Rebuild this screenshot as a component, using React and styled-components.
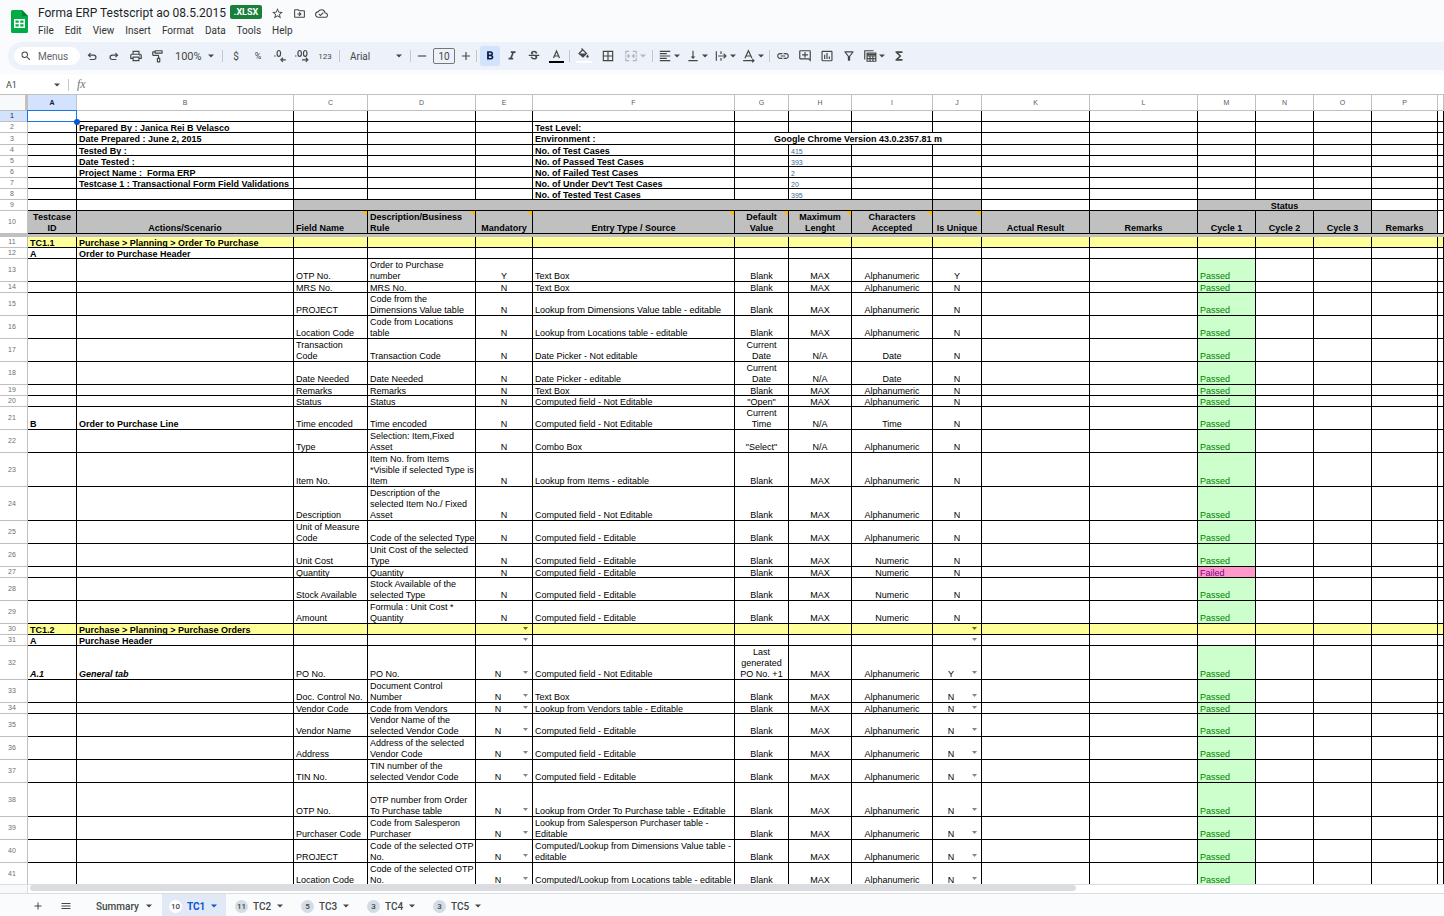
import React from "react";
import styled, { createGlobalStyle, css } from "styled-components";
import {
  MdStarBorder,
  MdOutlineDriveFileMove,
  MdOutlineCloudDone,
  MdSearch,
  MdOutlinePrint,
  MdOutlineImagesearchRoller,
  MdFormatBold,
  MdFormatItalic,
  MdStrikethroughS,
  MdBorderAll,
  MdFormatAlignLeft,
  MdVerticalAlignBottom,
  MdInsertLink,
  MdOutlineAddComment,
  MdInsertChartOutlined,
  MdOutlineFilterAlt,
  MdFunctions,
  MdAdd,
  MdRemove,
  MdMenu,
} from "react-icons/md";

const GlobalStyle = createGlobalStyle`
  *, *::before, *::after { box-sizing: border-box; }
  body { margin: 0; background: #f9fbfd; }
  button, input, select { font: inherit; color: inherit; }
`;

const ui = `Roboto, "Liberation Sans", sans-serif`;
const sheet = `"Liberation Sans", Arial, sans-serif`;

const Page = styled.div`
  height: 100vh;
  display: flex;
  flex-direction: column;
  overflow: hidden;
  background: #f9fbfd;
  color: #444746;
  font-family: ${ui};
`;

const Header = styled.header`
  flex: none;
  display: flex;
  gap: 10px;
  height: 42px;
  padding: 5px 11px 0;
`;

const Logo = styled.svg`
  flex: none;
  width: 17px;
  height: 23px;
  margin-top: 5px;
`;

const TitleRow = styled.div`
  display: flex;
  align-items: center;
  height: 16px;
`;

const Title = styled.h1`
  margin: 0;
  font-size: 12px;
  font-weight: 400;
  color: #1f1f1f;
  white-space: nowrap;
`;

const FileType = styled.span`
  margin: 0 8px 2px 4px;
  width: 32px;
  height: 14px;
  border-radius: 2px;
  background: #188038;
  color: #fff;
  font-size: 9px;
  font-weight: 700;
  line-height: 14px;
  text-align: center;
`;

const PlainButton = styled.button`
  display: inline-flex;
  align-items: center;
  justify-content: center;
  padding: 0;
  border: 0;
  background: none;
`;

const TitleButton = styled(PlainButton)`
  width: 14px;
  height: 14px;
  margin-right: 8px;
  svg {
    width: 13px;
    height: 13px;
  }
`;

const MenuBar = styled.nav`
  display: flex;
  gap: 11px;
  margin-top: 2px;
`;

const MenuButton = styled(PlainButton)`
  height: 14px;
  font-size: 10px;
  color: #333;
`;

const Toolbar = styled.div`
  flex: none;
  display: flex;
  align-items: center;
  height: 28px;
  margin-left: 8px;
  margin-bottom: 5px;
  padding-left: 6px;
  border-radius: 14px 0 0 14px;
  background: #edf2fa;
`;

const MenuSearch = styled.label`
  display: flex;
  align-items: center;
  gap: 6px;
  width: 66px;
  height: 18px;
  margin-right: 1px;
  padding-left: 6px;
  border-radius: 9px;
  background: #fff;
  svg {
    flex: none;
    width: 12px;
    height: 12px;
  }
  input {
    width: 38px;
    padding: 0;
    border: 0;
    outline: 0;
    background: none;
    font-size: 10px;
  }
  input::placeholder {
    color: #5f6368;
    opacity: 1;
  }
`;

const ToolButton = styled(PlainButton)`
  flex: none;
  width: ${(p) => p.$w || 22}px;
  height: 20px;
  font-size: ${(p) => p.$size || 9}px;
  color: ${(p) => (p.$dim ? "#b4b7bb" : "#444746")};
  svg.icon {
    flex: none;
    width: 14px;
    height: 14px;
  }
  ${(p) =>
    p.$split &&
    css`
      gap: 1px;
    `}
`;

const ActiveMark = styled.span`
  display: flex;
  align-items: center;
  justify-content: center;
  width: 20px;
  height: 20px;
  border-radius: 2px;
  background: #d3e3fd;
  color: #041e49;
`;

const Separator = styled.span`
  flex: none;
  width: 1px;
  height: 12px;
  margin: 0 2px;
  background: #c7c7c7;
`;

const SelectBox = styled.label`
  flex: none;
  display: flex;
  align-items: center;
  width: ${(p) => p.$w}px;
  padding: 0 5px 0 ${(p) => p.$pad}px;
  select {
    flex: 1;
    min-width: 0;
    padding: 0;
    border: 0;
    background: none;
    appearance: none;
    font-size: ${(p) => p.$size}px;
  }
`;

const SizeInput = styled.input`
  flex: none;
  width: 22px;
  height: 16px;
  margin: 0 2px;
  padding: 0;
  border: 1px solid #747775;
  border-radius: 2px;
  background: none;
  font-size: 10px;
  text-align: center;
`;

const FormulaBar = styled.div`
  flex: none;
  display: flex;
  align-items: center;
  height: 20px;
  border-bottom: 1px solid #c0c0c0;
  background: #fff;
`;

const NameBox = styled.label`
  display: flex;
  align-items: center;
  width: 66px;
  padding: 0 5px 0 6px;
  input {
    flex: 1;
    min-width: 0;
    padding: 0;
    border: 0;
    outline: 0;
    font-size: 9px;
  }
`;

const FxMark = styled.label`
  width: 20px;
  padding-left: 6px;
  font-family: "Liberation Serif", serif;
  font-style: italic;
  font-size: 12px;
  color: #6f757b;
`;

const FormulaInput = styled.input`
  flex: 1;
  border: 0;
  outline: 0;
  font-size: 10px;
`;

const GridArea = styled.main`
  flex: 1;
  min-height: 0;
  overflow: hidden;
  background: #fff;
`;

const Table = styled.table`
  width: 100%;
  table-layout: fixed;
  border-collapse: separate;
  border-spacing: 0;
  font-family: ${sheet};
  font-size: 9px;
  line-height: 11px;
  color: #000;
`;

const Corner = styled.td`
  padding: 0;
  border-right: 3px solid #c0c0c0;
  border-bottom: 1px solid #c0c0c0;
  background: #f8f9fa;
`;

const ColumnHead = styled.th`
  height: 16px;
  padding: 0;
  border-right: 1px solid #c0c0c0;
  border-bottom: 1px solid ${(p) => (p.$active ? "#1a73e8" : "#c0c0c0")};
  background: ${(p) => (p.$active ? "#d3e3fd" : "#fff")};
  color: ${(p) => (p.$active ? "#041e49" : "#575b5f")};
  font-size: 7px;
  font-weight: ${(p) => (p.$active ? 700 : 400)};
  line-height: 15px;
`;

const RowHead = styled.th`
  padding: 0;
  border-right: 1px solid #c0c0c0;
  border-bottom: 1px solid #c0c0c0;
  background: ${(p) => (p.$active ? "#d3e3fd" : "#fff")};
  color: ${(p) => (p.$active ? "#041e49" : "#6b6f73")};
  font-size: 7px;
  font-weight: 400;
  line-height: 8px;
  text-align: center;
`;

const RowNumber = styled.div`
  padding-right: 3px;
`;

const FrozenBar = styled.td`
  height: 3px;
  padding: 0;
  background: #c0c0c0;
`;

const Cell = styled.td`
  position: relative;
  padding: 0;
  border-right: 1px solid #000;
  border-bottom: 1px solid #000;
  background: ${(p) => p.$bg || "#fff"};
  color: ${(p) => p.$color || "#000"};
  font-weight: ${(p) => (p.$bold ? 700 : 400)};
  font-style: ${(p) => (p.$italic ? "italic" : "normal")};
  font-size: ${(p) => (p.$small ? 7 : 9)}px;
  text-align: ${(p) => (p.$center ? "center" : "left")};
`;

const CellBox = styled.div`
  display: flex;
  flex-direction: column;
  height: ${(p) => p.$h - 1}px;
  padding-top: 1px;
  overflow: hidden;
  white-space: pre;
`;

const CellText = styled.div`
  margin-top: auto;
  margin-bottom: -1px;
  padding-left: ${(p) => (p.$center ? 0 : 2)}px;
`;

const Note = styled.span`
  position: absolute;
  top: 0;
  right: 0;
  border-top: 5px solid #fbbc04;
  border-left: 5px solid transparent;
`;

const Selection = styled.span`
  position: absolute;
  z-index: 1;
  inset: -1px -1px -1px -1px;
  border: 1px solid #1a73e8;
  &::after {
    content: "";
    position: absolute;
    right: -4px;
    bottom: -4px;
    width: 6px;
    height: 6px;
    border-radius: 3px;
    background: #0b57d0;
  }
`;

const CellSelect = styled.label`
  display: flex;
  height: 11px;
  margin-top: auto;
  margin-bottom: -1px;
  flex: none;
  padding-right: 4px;
  select {
    flex: 1;
    min-width: 0;
    height: 11px;
    padding: 0;
    border: 0;
    background: none;
    appearance: none;
    line-height: 11px;
    text-align: center;
  }
  svg {
    flex: none;
    margin-top: 2px;
    margin-left: 3px;
    color: ${(p) => (p.$dark ? "#6b6b1a" : "#80868b")};
  }
`;

const ScrollRow = styled.div`
  flex: none;
  display: flex;
  height: 10px;
  border-top: 1px solid #dadce0;
  border-bottom: 1px solid #dadce0;
  background: #fff;
`;

const ScrollCorner = styled.div`
  flex: none;
  width: 28px;
  border-right: 1px solid #dadce0;
  background: #f8f9fa;
`;

const ScrollTrack = styled.div`
  flex: 1;
  padding: 0 0 0 2px;
`;

const ScrollThumb = styled.div`
  width: 74%;
  height: 6px;
  border-radius: 3px;
  background: #dadce0;
`;

const SheetTabs = styled.footer`
  flex: none;
  display: flex;
  align-items: stretch;
  height: 22px;
  padding-left: 28px;
  background: #f9fbfd;
`;

const FooterButton = styled(PlainButton)`
  width: 20px;
  margin-right: 8px;
  padding-top: 2px;
  svg {
    width: 12px;
    height: 12px;
  }
`;

const SummaryTab = styled(PlainButton)`
  justify-content: flex-start;
  gap: 6px;
  width: 78px;
  padding: 2px 0 0 12px;
  font-size: 10px;
  font-weight: 500;
`;

const Tab = styled(PlainButton)`
  justify-content: flex-start;
  gap: 5px;
  width: 64px;
  margin-right: 2px;
  padding: 2px 0 0 7px;
  background: ${(p) => (p.$active ? "#e1e9f7" : "none")};
  color: ${(p) => (p.$active ? "#0b57d0" : "#444746")};
  font-size: 10px;
  font-weight: ${(p) => (p.$active ? 700 : 500)};
`;

const Count = styled.span`
  width: 13px;
  height: 13px;
  border-radius: 50%;
  background: ${(p) => (p.$active ? "#fff" : "#d3dbe5")};
  color: #444746;
  font-size: 8px;
  font-weight: 500;
  line-height: 13px;
  text-align: center;
`;

const Caret = ({ w = 8 }) => (
  <svg width={w} height={w} viewBox="0 0 8 8" aria-hidden="true">
    <path d="M1 2.5h6L4 5.5z" fill="currentColor" />
  </svg>
);

const Icon = ({ children }) => (
  <svg className="icon" viewBox="0 0 24 24" fill="none" stroke="currentColor" strokeWidth="2" aria-hidden="true">
    {children}
  </svg>
);

const UndoIcon = () => (
  <Icon>
    <path d="M9.500 7 6 10.500 9.500 14M6 10.500h9a3.750 3.750 0 0 1 0 7.500H8" />
  </Icon>
);
const RedoIcon = () => (
  <Icon>
    <path d="M14.500 7 18 10.500 14.500 14M18 10.500H9a3.750 3.750 0 0 0 0 7.500h7" />
  </Icon>
);
const LessDecimals = () => (
  <Icon>
    <path d="M2 12h2.500M22 18.500h-8M17 15l-3.500 3.500L17 22" />
    <ellipse cx="10" cy="7.500" rx="3" ry="5" />
  </Icon>
);
const MoreDecimals = () => (
  <Icon>
    <path d="M0 12h2.500M12 18.500h10M18.500 15l3.500 3.500-3.500 3.500" />
    <ellipse cx="8" cy="7.500" rx="3" ry="5" />
    <ellipse cx="17.500" cy="7.500" rx="3" ry="5" />
  </Icon>
);
const TextColorIcon = () => (
  <svg width="15" height="18" viewBox="0 0 15 18" aria-hidden="true">
    <path d="M4.500 11 7.500 4l3 7M5.500 9h4" fill="none" stroke="#444746" strokeWidth="1.200" />
    <path d="M0 14h15v2H0z" fill="#000" />
  </svg>
);
const FillIcon = () => (
  <svg width="16" height="18" viewBox="0 0 16 18" aria-hidden="true">
    <path d="M5.500 1.500 10.500 6.500 7 10 3 6.500 6.500 3" fill="none" stroke="#444746" strokeWidth="1.200" />
    <path d="M3 6.500h7.500L7 10z" fill="#444746" />
    <path d="M11.500 7.500s-1.200 1.300-1.200 2.100a1.200 1.200 0 0 0 2.400 0c0-.8-1.200-2.100-1.200-2.100z" fill="#444746" />
    <path d="M0 14h16v2H0z" fill="#fff" />
  </svg>
);
const MergeIcon = () => (
  <Icon>
    <path d="M9 4H3v5M3 15v5h6M15 4h6v5M21 15v5h-6M1 12h8M6.500 9l3 3-3 3M23 12h-8M17.500 9l-3 3 3 3" />
  </Icon>
);
const WrapIcon = () => (
  <Icon>
    <path d="M4 4v16M12 4v4.500M12 15.500V20M7 12h13M16.500 8l4 4-4 4" />
  </Icon>
);
const RotateIcon = () => (
  <Icon>
    <path d="M5 16 11 3l6 13M7 12h8M2 20h18M17.500 17l3 3-3 3" />
  </Icon>
);
const TableViewIcon = () => (
  <Icon>
    <path d="M3 18V3h15M7 7h15v14H7zM7 12h15M12 12v9M17 12v9M7 16.500h15M7 9.500h15" />
  </Icon>
);

const columns = [
  ["A", 49], ["B", 217], ["C", 74], ["D", 108], ["E", 57], ["F", 202], ["G", 54], ["H", 63], ["I", 81],
  ["J", 49], ["K", 108], ["L", 108], ["M", 58], ["N", 58], ["O", 58], ["P", 66],
];
const letters = "ABCDEFGHIJKLMNOPQ".split("");
const centered = new Set(["E", "G", "H", "I", "J"]);
const yellow = "#ffff99";
const gray = "#c0c0c0";

const field = (n, h, C, D, E, F, G, H, I, J, extra = {}) => ({
  n, h, status: "Passed", cells: { C, D, E, F, G, H, I, J }, ...extra,
});
const info = (n, h, B, F, H) => ({ n, h, bold: true, cells: { B, F, H } });
const AN = "Alphanumeric";
const CE = "Computed field - Editable";
const CN = "Computed field - Not Editable";
const pick = { pick: true };

const topRows = [
  { n: 1, h: 11, cells: {}, selected: true },
  info(2, 11, "Prepared By : Janica Rei B Velasco", "Test Level:"),
  { n: 3, h: 12, bold: true, spans: { G: 4 },
    cells: { B: "Date Prepared : June 2, 2015", F: "Environment :", G: "Google Chrome Version 43.0.2357.81 m" } },
  info(4, 11, "Tested By :", "No. of Test Cases", "415"),
  info(5, 11, "Date Tested :", "No. of Passed Test Cases", "393"),
  info(6, 11, "Project Name :  Forma ERP", "No. of Failed Test Cases", "2"),
  info(7, 11, "Testcase 1 : Transactional Form Field Validations", "No. of Under Dev't Test Cases", "20"),
  info(8, 11, "", "No. of Tested Test Cases", "395"),
  { n: 9, h: 11, bold: true, spans: { C: 7, M: 3 }, fills: { C: gray, J: gray, M: gray }, center: ["M"], cells: { M: "Status" } },
  { n: 10, h: 23, bold: true, header: true, notes: "CDEFGHIJ",
    cells: { A: "Testcase\nID", B: "Actions/Scenario", C: "Field Name", D: "Description/Business\nRule", E: "Mandatory",
      F: "Entry Type / Source", G: "Default\nValue", H: "Maximum\nLenght", I: "Characters\nAccepted", J: "Is Unique",
      K: "Actual Result", L: "Remarks", M: "Cycle 1", N: "Cycle 2", O: "Cycle 3", P: "Remarks" } },
];

const rows = [
  { n: 11, h: 11, bold: true, bg: yellow, cells: { A: "TC1.1", B: "Purchase > Planning > Order To Purchase" } },
  { n: 12, h: 11, bold: true, cells: { A: "A", B: "Order to Purchase Header" } },
  field(13, 23, "OTP No.", "Order to Purchase\nnumber", "Y", "Text Box", "Blank", "MAX", AN, "Y"),
  field(14, 11, "MRS No.", "MRS No.", "N", "Text Box", "Blank", "MAX", AN, "N"),
  field(15, 23, "PROJECT", "Code from the\nDimensions Value table", "N", "Lookup from Dimensions Value table - editable", "Blank", "MAX", AN, "N"),
  field(16, 23, "Location Code", "Code from Locations\ntable", "N", "Lookup from Locations table - editable", "Blank", "MAX", AN, "N"),
  field(17, 23, "Transaction\nCode", "Transaction Code", "N", "Date Picker - Not editable", "Current\nDate", "N/A", "Date", "N"),
  field(18, 23, "Date Needed", "Date Needed", "N", "Date Picker - editable", "Current\nDate", "N/A", "Date", "N"),
  field(19, 11, "Remarks", "Remarks", "N", "Text Box", "Blank", "MAX", AN, "N"),
  field(20, 11, "Status", "Status", "N", CN, "\"Open\"", "MAX", AN, "N"),
  field(21, 23, "Time encoded", "Time encoded", "N", CN, "Current\nTime", "N/A", "Time", "N", { section: ["B", "Order to Purchase Line"] }),
  field(22, 23, "Type", "Selection: Item,Fixed\nAsset", "N", "Combo Box", "\"Select\"", "N/A", AN, "N"),
  field(23, 34, "Item No.", "Item No. from Items\n*Visible if selected Type is\nItem", "N", "Lookup from Items - editable", "Blank", "MAX", AN, "N"),
  field(24, 34, "Description", "Description of the\nselected Item No./ Fixed\nAsset", "N", CN, "Blank", "MAX", AN, "N"),
  field(25, 23, "Unit of Measure\nCode", "Code of the selected Type", "N", CE, "Blank", "MAX", AN, "N"),
  field(26, 23, "Unit Cost", "Unit Cost of the selected\nType", "N", CE, "Blank", "MAX", "Numeric", "N"),
  field(27, 11, "Quantity", "Quantity", "N", CE, "Blank", "MAX", "Numeric", "N", { status: "Failed" }),
  field(28, 23, "Stock Available", "Stock Available of the\nselected Type", "N", CE, "Blank", "MAX", "Numeric", "N"),
  field(29, 23, "Amount", "Formula : Unit Cost *\nQuantity", "N", CE, "Blank", "MAX", "Numeric", "N"),
  { n: 30, h: 11, bold: true, bg: yellow, pick: true, cells: { A: "TC1.2", B: "Purchase > Planning > Purchase Orders" } },
  { n: 31, h: 11, bold: true, pick: true, cells: { A: "A", B: "Purchase Header" } },
  field(32, 34, "PO No.", "PO No.", "N", CN, "Last\ngenerated\nPO No. +1", "MAX", AN, "Y", { ...pick, section: ["A.1", "General tab"], italic: true }),
  field(33, 23, "Doc. Control No.", "Document Control\nNumber", "N", "Text Box", "Blank", "MAX", AN, "N", pick),
  field(34, 11, "Vendor Code", "Code from Vendors", "N", "Lookup from Vendors table - Editable", "Blank", "MAX", AN, "N", pick),
  field(35, 23, "Vendor Name", "Vendor Name of the\nselected Vendor Code", "N", CE, "Blank", "MAX", AN, "N", pick),
  field(36, 23, "Address", "Address of the selected\nVendor Code", "N", CE, "Blank", "MAX", AN, "N", pick),
  field(37, 23, "TIN No.", "TIN number of the\nselected Vendor Code", "N", CE, "Blank", "MAX", AN, "N", pick),
  field(38, 34, "OTP No.", "OTP number from Order\nTo Purchase table", "N", "Lookup from Order To Purchase table - Editable", "Blank", "MAX", AN, "N", pick),
  field(39, 23, "Purchaser Code", "Code from Salesperon\nPurchaser", "N", "Lookup from Salesperson Purchaser table -\nEditable", "Blank", "MAX", AN, "N", pick),
  field(40, 23, "PROJECT", "Code of the selected OTP\nNo.", "N", "Computed/Lookup from Dimensions Value table -\neditable", "Blank", "MAX", AN, "N", pick),
  field(41, 23, "Location Code", "Code of the selected OTP\nNo.", "N", "Computed/Lookup from Locations table - editable", "Blank", "MAX", AN, "N", pick),
];

function cellStyle(row, col) {
  const style = { $bg: row.bg, $bold: row.bold, $center: centered.has(col) };
  if (row.header) {
    style.$bg = col === "Q" ? "#fff" : gray;
    style.$center = col !== "C" && col !== "D";
  }
  if (row.fills && row.fills[col]) style.$bg = row.fills[col];
  if (row.center && row.center.includes(col)) style.$center = true;
  if (row.n >= 4 && row.n <= 8 && col === "H") {
    Object.assign(style, { $bold: false, $small: true, $center: false, $color: "#3d6a94" });
  }
  if (row.status && col === "M") {
    const passed = row.status === "Passed";
    style.$bg = passed ? "#ccffcc" : "#ff99cc";
    style.$color = passed ? "#008000" : "#800080";
  }
  if (row.section && (col === "A" || col === "B")) {
    style.$bold = true;
    style.$italic = row.italic;
  }
  return style;
}

function cellText(row, col) {
  if (row.section && col === "A") return row.section[0];
  if (row.section && col === "B") return row.section[1];
  if (row.status && col === "M") return row.status;
  return row.cells[col] || "";
}

function SheetRow({ row }) {
  const cells = [];
  for (let i = 0; i < letters.length; i += 1) {
    const col = letters[i];
    const span = (row.spans && row.spans[col]) || 1;
    const style = cellStyle(row, col);
    const text = cellText(row, col);
    const isPick = row.pick && (col === "E" || col === "J");
    cells.push(
      <Cell key={col} colSpan={span} {...style}>
        <CellBox $h={row.h}>
          {isPick ? (
            <CellSelect $dark={row.bg === yellow}>
              <select aria-label={`${col}${row.n}`} defaultValue={text}>
                <option value="" />
                <option>Y</option>
                <option>N</option>
              </select>
              <svg width="5" height="3" viewBox="0 0 5 3" aria-hidden="true">
                <path d="M0 0h5L2.500 3z" fill="currentColor" />
              </svg>
            </CellSelect>
          ) : (
            text && <CellText $center={style.$center}>{text}</CellText>
          )}
        </CellBox>
        {row.notes && row.notes.includes(col) && <Note />}
        {row.selected && col === "A" && <Selection />}
      </Cell>
    );
    i += span - 1;
  }
  return (
    <tr>
      <RowHead scope="row" $active={row.selected}>
        <RowNumber>{row.n}</RowNumber>
      </RowHead>
      {cells}
    </tr>
  );
}

export default function App() {
  return (
    <Page>
      <GlobalStyle />
      <Header>
        <Logo viewBox="0 0 17 23" aria-label="Sheets" role="img">
          <path d="M1.500 0H11l6 6v15.500a1.500 1.500 0 0 1-1.500 1.500h-14A1.500 1.500 0 0 1 0 21.500v-20A1.500 1.500 0 0 1 1.500 0z" fill="#00ac47" />
          <path d="M11 0l6 6h-6z" fill="#00832d" />
          <path d="M3 9h11v9H3zm1.500 1.500v2.250h3.250V10.500zm4.750 0v2.250h3.250V10.500zM4.500 14.250v2.250h3.250v-2.250zm4.750 0v2.250h3.250v-2.250z" fill="#fff" fillRule="evenodd" />
        </Logo>
        <div>
          <TitleRow>
            <Title>Forma ERP Testscript ao 08.5.2015</Title>
            <FileType>.XLSX</FileType>
            <TitleButton aria-label="Star"><MdStarBorder /></TitleButton>
            <TitleButton aria-label="Move"><MdOutlineDriveFileMove /></TitleButton>
            <TitleButton aria-label="Saved to Drive"><MdOutlineCloudDone /></TitleButton>
          </TitleRow>
          <MenuBar>
            {["File", "Edit", "View", "Insert", "Format", "Data", "Tools", "Help"].map((m) => (
              <MenuButton key={m}>{m}</MenuButton>
            ))}
          </MenuBar>
        </div>
      </Header>

      <Toolbar role="toolbar" aria-label="Main">
        <MenuSearch>
          <MdSearch />
          <input placeholder="Menus" aria-label="Menus" />
        </MenuSearch>
        <ToolButton aria-label="Undo"><UndoIcon /></ToolButton>
        <ToolButton aria-label="Redo"><RedoIcon /></ToolButton>
        <ToolButton aria-label="Print"><MdOutlinePrint className="icon" /></ToolButton>
        <ToolButton aria-label="Paint format"><MdOutlineImagesearchRoller className="icon" /></ToolButton>
        <SelectBox $w={51} $pad={6} $size={11}>
          <select aria-label="Zoom" defaultValue="100%"><option>100%</option></select>
          <Caret />
        </SelectBox>
        <Separator />
        <ToolButton aria-label="Currency" $size={10}>$</ToolButton>
        <ToolButton aria-label="Percent" $size={9}>%</ToolButton>
        <ToolButton aria-label="Decrease decimal places"><LessDecimals /></ToolButton>
        <ToolButton aria-label="Increase decimal places"><MoreDecimals /></ToolButton>
        <ToolButton aria-label="More formats" $w={24} $size={8}>123</ToolButton>
        <Separator />
        <SelectBox $w={66} $pad={8} $size={10}>
          <select aria-label="Font" defaultValue="Arial"><option>Arial</option></select>
          <Caret />
        </SelectBox>
        <Separator />
        <ToolButton $w={18} aria-label="Decrease font size"><MdRemove className="icon" /></ToolButton>
        <SizeInput aria-label="Font size" defaultValue="10" />
        <ToolButton $w={17} aria-label="Increase font size"><MdAdd className="icon" /></ToolButton>
        <Separator />
        <ToolButton aria-label="Bold" aria-pressed="true"><ActiveMark><MdFormatBold className="icon" /></ActiveMark></ToolButton>
        <ToolButton aria-label="Italic"><MdFormatItalic className="icon" /></ToolButton>
        <ToolButton aria-label="Strikethrough"><MdStrikethroughS className="icon" /></ToolButton>
        <ToolButton aria-label="Text color"><TextColorIcon /></ToolButton>
        <Separator />
        <ToolButton $w={24} aria-label="Fill color"><FillIcon /></ToolButton>
        <ToolButton $w={24} aria-label="Borders"><MdBorderAll className="icon" /></ToolButton>
        <ToolButton $w={30} $split $dim aria-label="Merge cells"><MergeIcon /><Caret /></ToolButton>
        <Separator />
        <ToolButton $w={28} $split aria-label="Horizontal align"><MdFormatAlignLeft className="icon" /><Caret /></ToolButton>
        <ToolButton $w={28} $split aria-label="Vertical align"><MdVerticalAlignBottom className="icon" /><Caret /></ToolButton>
        <ToolButton $w={28} $split aria-label="Text wrapping"><WrapIcon /><Caret /></ToolButton>
        <ToolButton $w={28} $split aria-label="Text rotation"><RotateIcon /><Caret /></ToolButton>
        <Separator />
        <ToolButton aria-label="Insert link"><MdInsertLink className="icon" /></ToolButton>
        <ToolButton aria-label="Insert comment"><MdOutlineAddComment className="icon" /></ToolButton>
        <ToolButton aria-label="Insert chart"><MdInsertChartOutlined className="icon" /></ToolButton>
        <ToolButton aria-label="Create a filter"><MdOutlineFilterAlt className="icon" /></ToolButton>
        <ToolButton $w={28} $split aria-label="Filter views"><TableViewIcon /><Caret /></ToolButton>
        <ToolButton aria-label="Functions"><MdFunctions className="icon" /></ToolButton>
      </Toolbar>

      <FormulaBar>
        <NameBox>
          <input aria-label="Name box" defaultValue="A1" />
          <Caret />
        </NameBox>
        <Separator />
        <FxMark htmlFor="formula">fx</FxMark>
        <FormulaInput id="formula" />
      </FormulaBar>

      <GridArea>
        <Table>
          <colgroup>
            <col style={{ width: 28 }} />
            {columns.map(([c, w]) => (
              <col key={c} style={{ width: w }} />
            ))}
            <col />
          </colgroup>
          <thead>
            <tr>
              <Corner />
              {columns.map(([c]) => (
                <ColumnHead key={c} scope="col" $active={c === "A"}>{c}</ColumnHead>
              ))}
              <ColumnHead scope="col" />
            </tr>
          </thead>
          <tbody>
            {topRows.map((r) => <SheetRow key={r.n} row={r} />)}
            <tr><FrozenBar colSpan={18} /></tr>
            {rows.map((r) => <SheetRow key={r.n} row={r} />)}
          </tbody>
        </Table>
      </GridArea>

      <ScrollRow>
        <ScrollCorner />
        <ScrollTrack><ScrollThumb /></ScrollTrack>
      </ScrollRow>

      <SheetTabs>
        <FooterButton aria-label="Add sheet"><MdAdd /></FooterButton>
        <FooterButton aria-label="All sheets"><MdMenu /></FooterButton>
        <SummaryTab>Summary<Caret /></SummaryTab>
        {[["TC1", 10], ["TC2", 11], ["TC3", 5], ["TC4", 3], ["TC5", 3]].map(([name, count], i) => (
          <Tab key={name} $active={i === 0}>
            <Count $active={i === 0}>{count}</Count>
            {name}
            <Caret />
          </Tab>
        ))}
      </SheetTabs>
    </Page>
  );
}
